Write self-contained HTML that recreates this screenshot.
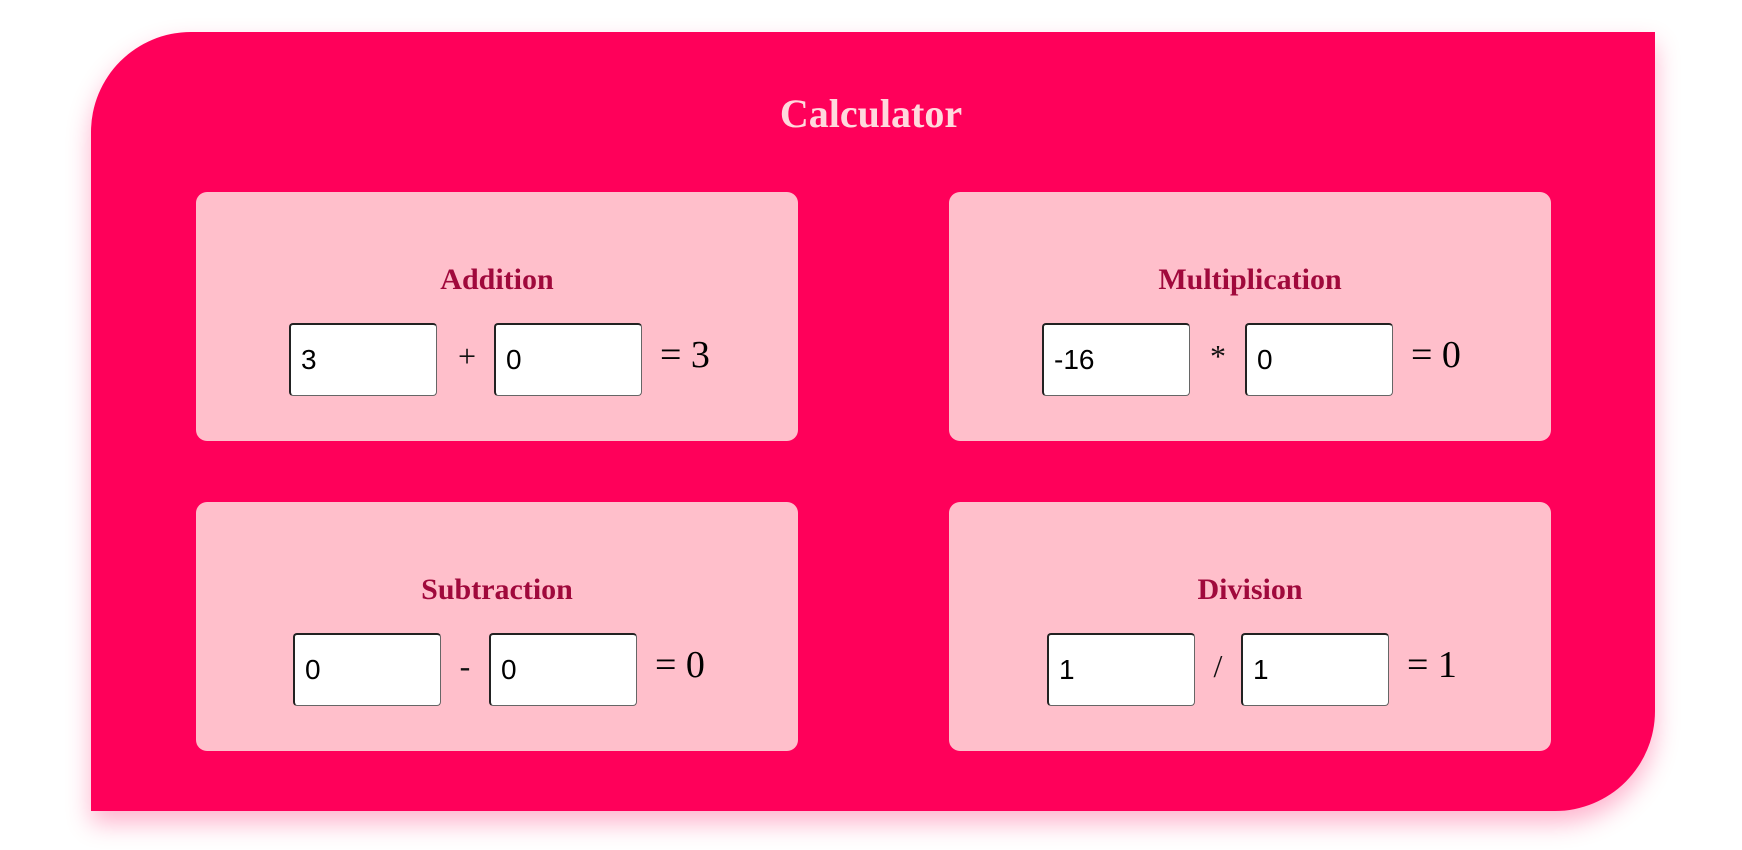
<!DOCTYPE html>
<html><head><style>
body{margin:0;width:1742px;height:850px;background:#fff;position:relative;overflow:hidden;font-family:"Liberation Serif",serif}
.box{position:absolute;left:91px;top:32px;width:1564px;height:779px;background:#ff005a;border-radius:100px 0 100px 0;box-shadow:0 12px 25px rgba(255,0,90,0.3)}
h1{position:absolute;left:0;width:1742px;top:90px;margin:0;text-align:center;font-size:40px;font-weight:bold;color:#ffd9dd}
.card{position:absolute;width:602px;height:249px;background:#ffbfcb;border-radius:11px}
.card h2{position:absolute;left:0;right:0;top:71px;margin:0;text-align:center;font-size:30px;color:#a0093c}
.in{position:absolute;width:148px;height:73px;background:#fff;border:1px solid #666;border-top:2px solid #222;border-left:2px solid #222;border-radius:4px;box-sizing:border-box;font-family:"Liberation Sans",sans-serif;font-size:28px;line-height:70px;padding-left:10px;color:#000}
.op{position:absolute;font-size:32px;color:#111;transform:translateX(-50%)}
.eq{position:absolute;font-size:38px;color:#000}
</style></head><body>
<div class="box"></div>
<h1>Calculator</h1>
<div class="card" style="left:196px;top:192px"><h2>Addition</h2></div>
<div class="card" style="left:949px;top:192px"><h2>Multiplication</h2></div>
<div class="card" style="left:196px;top:502px"><h2>Subtraction</h2></div>
<div class="card" style="left:949px;top:502px"><h2>Division</h2></div>

<div class="in" style="left:289px;top:323px">3</div>
<div class="op" style="left:467px;top:338px">+</div>
<div class="in" style="left:494px;top:323px">0</div>
<div class="eq" style="left:660px;top:333px">= 3</div>

<div class="in" style="left:1042px;top:323px">-16</div>
<div class="op" style="left:1218px;top:338px">*</div>
<div class="in" style="left:1245px;top:323px">0</div>
<div class="eq" style="left:1411px;top:333px">= 0</div>

<div class="in" style="left:293px;top:633px">0</div>
<div class="op" style="left:465px;top:648px">-</div>
<div class="in" style="left:489px;top:633px">0</div>
<div class="eq" style="left:655px;top:643px">= 0</div>

<div class="in" style="left:1047px;top:633px">1</div>
<div class="op" style="left:1218px;top:648px">/</div>
<div class="in" style="left:1241px;top:633px">1</div>
<div class="eq" style="left:1407px;top:643px">= 1</div>
</body></html>
